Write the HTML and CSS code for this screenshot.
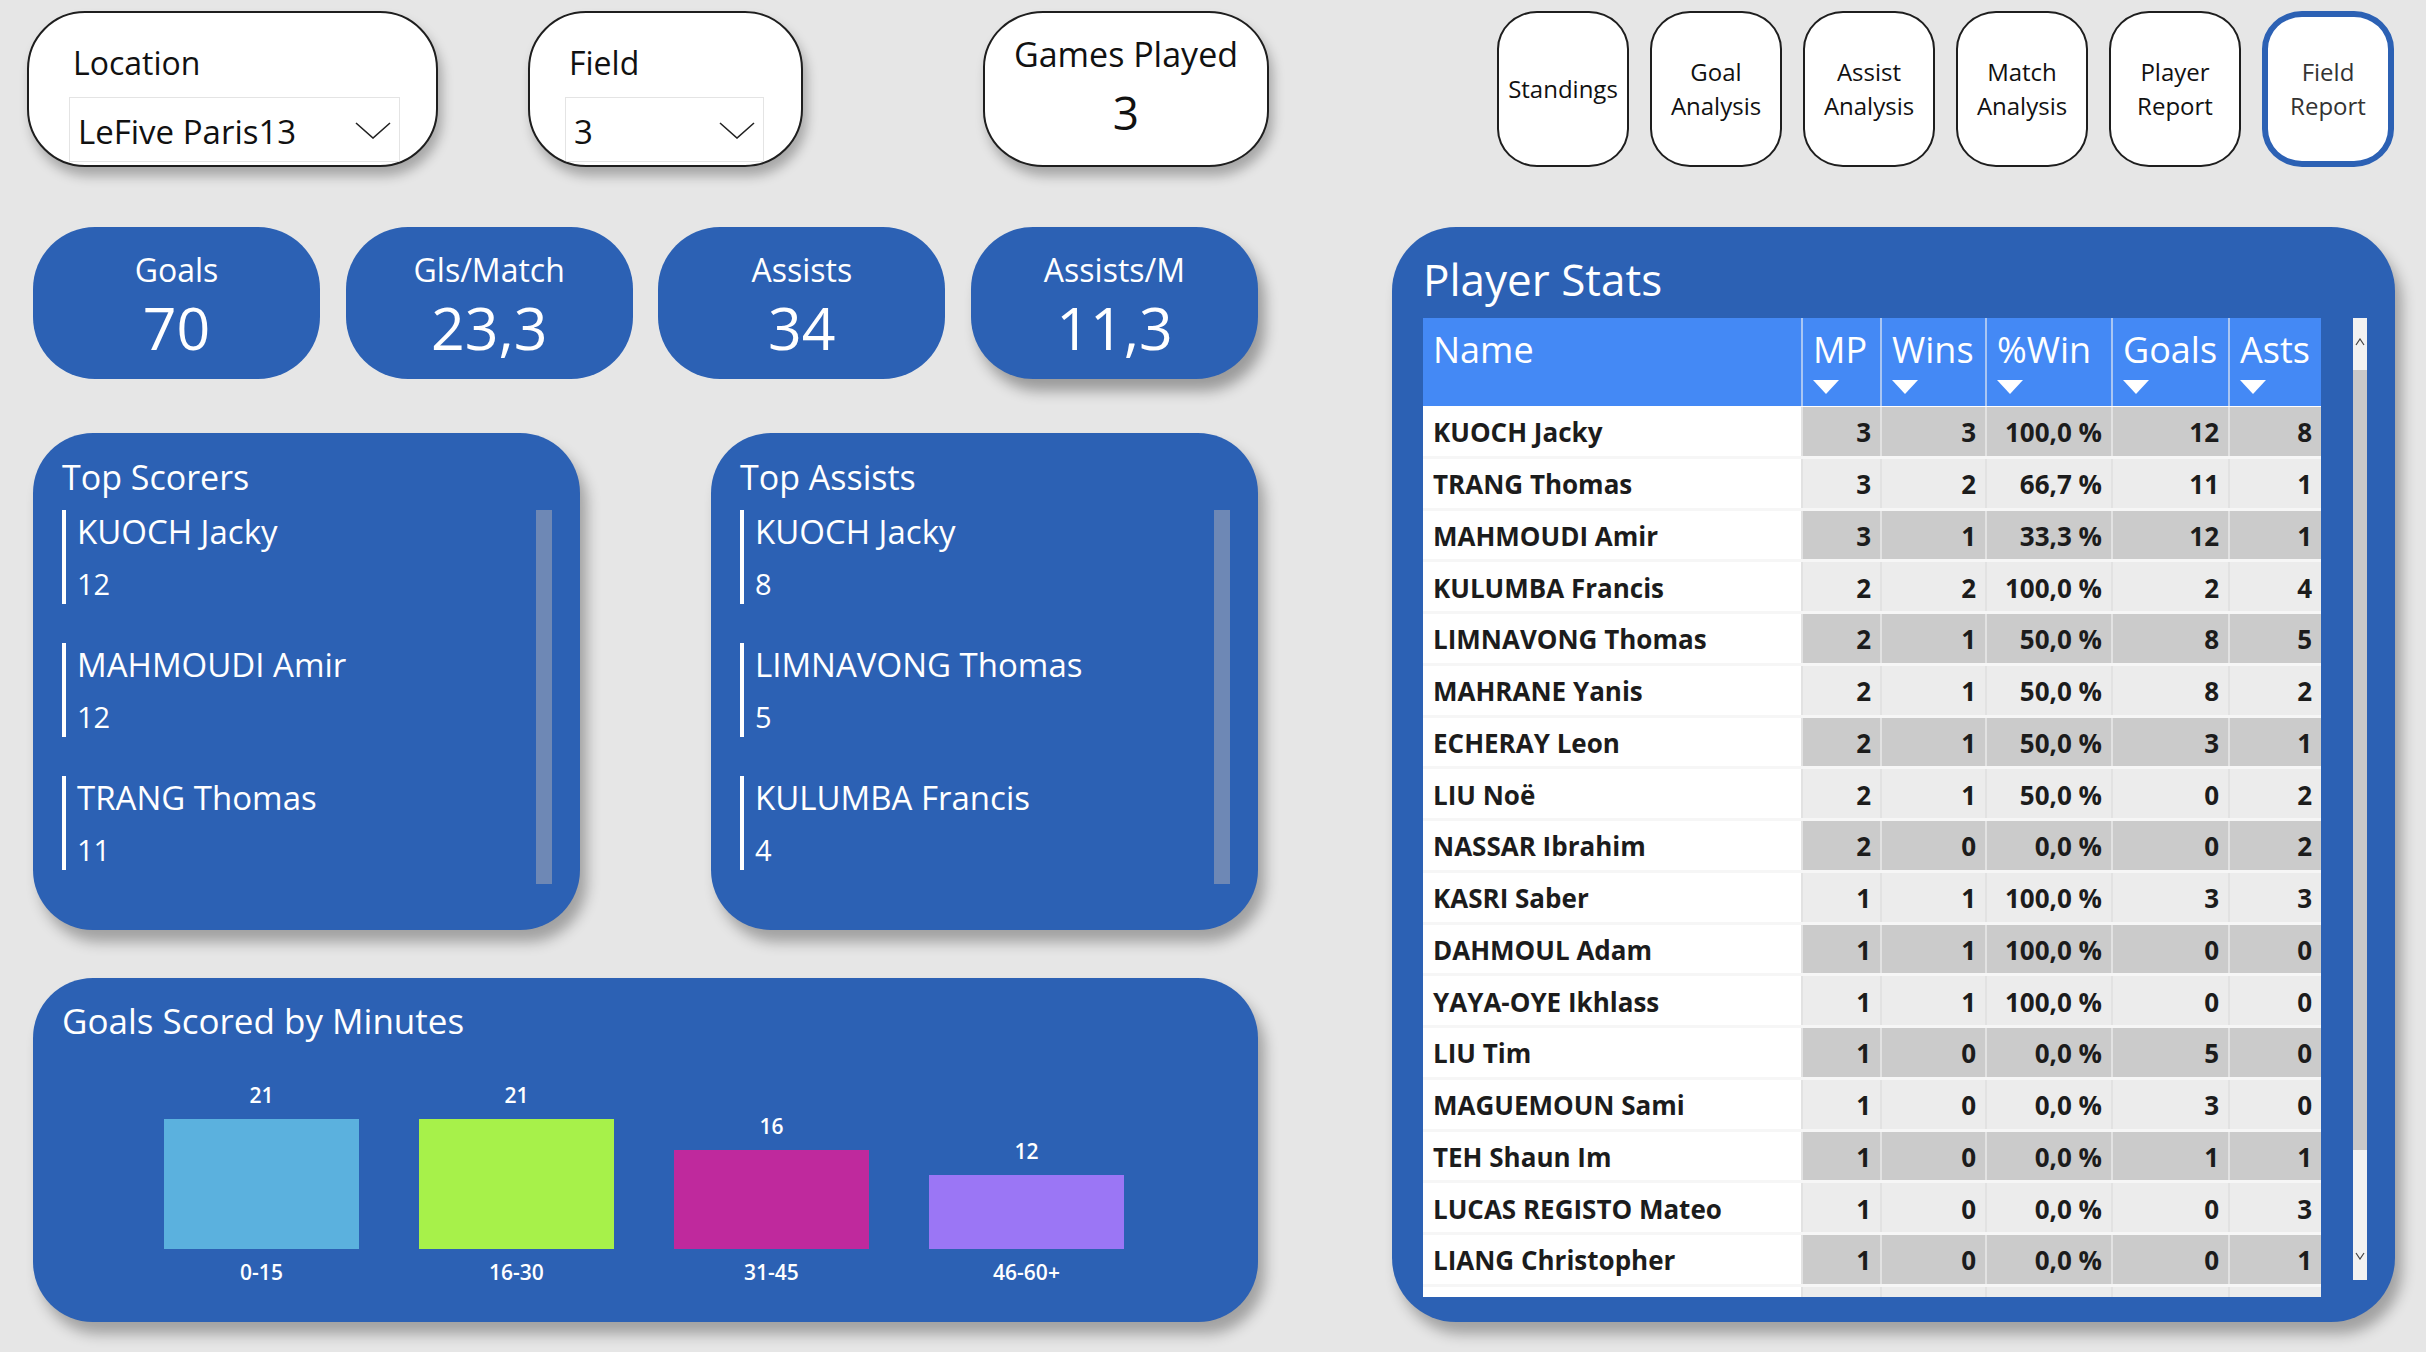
FILE: index.html
```html
<!DOCTYPE html>
<html lang="en">
<head>
<meta charset="utf-8">
<title>Field Report</title>
<link rel="stylesheet" href="styles.css">
</head>
<body>
<div class="page">
  <header class="topbar">
    <div class="filter location">
      <div class="filter-label">Location</div>
      <div class="dropdown">
        <span class="dd-value">LeFive Paris13</span>
        <svg class="chev" width="36" height="17" viewBox="0 0 36 17"><polyline points="1,1 18,16 35,1" fill="none" stroke="#222" stroke-width="1.6"/></svg>
      </div>
    </div>
    <div class="filter field">
      <div class="filter-label">Field</div>
      <div class="dropdown">
        <span class="dd-value small">3</span>
        <svg class="chev" width="36" height="17" viewBox="0 0 36 17"><polyline points="1,1 18,16 35,1" fill="none" stroke="#222" stroke-width="1.6"/></svg>
      </div>
    </div>
    <div class="games">
      <div class="games-label">Games Played</div>
      <div class="games-value">3</div>
    </div>
    <nav class="nav">
      <div class="nav-btn">Standings</div>
      <div class="nav-btn">Goal<br>Analysis</div>
      <div class="nav-btn">Assist<br>Analysis</div>
      <div class="nav-btn">Match<br>Analysis</div>
      <div class="nav-btn">Player<br>Report</div>
      <div class="nav-btn active">Field<br>Report</div>
    </nav>
  </header>

  <main class="main">
    <section class="left">
      <div class="kpis">
        <div class="kpi"><div class="kpi-label">Goals</div><div class="kpi-value">70</div></div>
        <div class="kpi"><div class="kpi-label">Gls/Match</div><div class="kpi-value">23,3</div></div>
        <div class="kpi"><div class="kpi-label">Assists</div><div class="kpi-value">34</div></div>
        <div class="kpi shadow"><div class="kpi-label">Assists/M</div><div class="kpi-value">11,3</div></div>
      </div>

      <div class="lists">
        <div class="card list-card scorers">
          <div class="card-title">Top Scorers</div>
          <div class="list-body">
            <div class="items">
              <div class="item"><div class="item-name">KUOCH Jacky</div><div class="item-num">12</div></div>
              <div class="item"><div class="item-name">MAHMOUDI Amir</div><div class="item-num">12</div></div>
              <div class="item"><div class="item-name">TRANG Thomas</div><div class="item-num">11</div></div>
            </div>
            <div class="list-scroll"></div>
          </div>
        </div>
        <div class="card list-card assists">
          <div class="card-title">Top Assists</div>
          <div class="list-body">
            <div class="items">
              <div class="item"><div class="item-name">KUOCH Jacky</div><div class="item-num">8</div></div>
              <div class="item"><div class="item-name">LIMNAVONG Thomas</div><div class="item-num">5</div></div>
              <div class="item"><div class="item-name">KULUMBA Francis</div><div class="item-num">4</div></div>
            </div>
            <div class="list-scroll"></div>
          </div>
        </div>
      </div>

      <div class="card chart-card">
        <div class="card-title chart-title">Goals Scored by Minutes</div>
        <div class="bars">
          <div class="col"><div class="bar-val">21</div><div class="bar c1" style="height:130px"></div><div class="bar-cat">0-15</div></div>
          <div class="col"><div class="bar-val">21</div><div class="bar c2" style="height:130px"></div><div class="bar-cat">16-30</div></div>
          <div class="col"><div class="bar-val">16</div><div class="bar c3" style="height:99px"></div><div class="bar-cat">31-45</div></div>
          <div class="col"><div class="bar-val">12</div><div class="bar c4" style="height:74px"></div><div class="bar-cat">46-60+</div></div>
        </div>
      </div>
    </section>

    <section class="card stats">
      <div class="stats-title">Player Stats</div>
      <div class="stats-body">
        <div class="table">
          <div class="thead">
            <div class="th name-col">Name</div>
            <div class="th"><span>MP</span><svg class="sort" width="26" height="14" viewBox="0 0 26 14"><polygon points="0,0 26,0 13,14" fill="#fff"/></svg></div>
            <div class="th"><span>Wins</span><svg class="sort" width="26" height="14" viewBox="0 0 26 14"><polygon points="0,0 26,0 13,14" fill="#fff"/></svg></div>
            <div class="th"><span>%Win</span><svg class="sort" width="26" height="14" viewBox="0 0 26 14"><polygon points="0,0 26,0 13,14" fill="#fff"/></svg></div>
            <div class="th"><span>Goals</span><svg class="sort" width="26" height="14" viewBox="0 0 26 14"><polygon points="0,0 26,0 13,14" fill="#fff"/></svg></div>
            <div class="th last"><span>Asts</span><svg class="sort" width="26" height="14" viewBox="0 0 26 14"><polygon points="0,0 26,0 13,14" fill="#fff"/></svg></div>
          </div>
          <div class="tbody">
            <div class="tr dark"><div class="td name">KUOCH Jacky</div><div class="td">3</div><div class="td">3</div><div class="td">100,0 %</div><div class="td">12</div><div class="td">8</div></div>
            <div class="tr"><div class="td name">TRANG Thomas</div><div class="td">3</div><div class="td">2</div><div class="td">66,7 %</div><div class="td">11</div><div class="td">1</div></div>
            <div class="tr dark"><div class="td name">MAHMOUDI Amir</div><div class="td">3</div><div class="td">1</div><div class="td">33,3 %</div><div class="td">12</div><div class="td">1</div></div>
            <div class="tr"><div class="td name">KULUMBA Francis</div><div class="td">2</div><div class="td">2</div><div class="td">100,0 %</div><div class="td">2</div><div class="td">4</div></div>
            <div class="tr dark"><div class="td name">LIMNAVONG Thomas</div><div class="td">2</div><div class="td">1</div><div class="td">50,0 %</div><div class="td">8</div><div class="td">5</div></div>
            <div class="tr"><div class="td name">MAHRANE Yanis</div><div class="td">2</div><div class="td">1</div><div class="td">50,0 %</div><div class="td">8</div><div class="td">2</div></div>
            <div class="tr dark"><div class="td name">ECHERAY Leon</div><div class="td">2</div><div class="td">1</div><div class="td">50,0 %</div><div class="td">3</div><div class="td">1</div></div>
            <div class="tr"><div class="td name">LIU Noë</div><div class="td">2</div><div class="td">1</div><div class="td">50,0 %</div><div class="td">0</div><div class="td">2</div></div>
            <div class="tr dark"><div class="td name">NASSAR Ibrahim</div><div class="td">2</div><div class="td">0</div><div class="td">0,0 %</div><div class="td">0</div><div class="td">2</div></div>
            <div class="tr"><div class="td name">KASRI Saber</div><div class="td">1</div><div class="td">1</div><div class="td">100,0 %</div><div class="td">3</div><div class="td">3</div></div>
            <div class="tr dark"><div class="td name">DAHMOUL Adam</div><div class="td">1</div><div class="td">1</div><div class="td">100,0 %</div><div class="td">0</div><div class="td">0</div></div>
            <div class="tr"><div class="td name">YAYA-OYE Ikhlass</div><div class="td">1</div><div class="td">1</div><div class="td">100,0 %</div><div class="td">0</div><div class="td">0</div></div>
            <div class="tr dark"><div class="td name">LIU Tim</div><div class="td">1</div><div class="td">0</div><div class="td">0,0 %</div><div class="td">5</div><div class="td">0</div></div>
            <div class="tr"><div class="td name">MAGUEMOUN Sami</div><div class="td">1</div><div class="td">0</div><div class="td">0,0 %</div><div class="td">3</div><div class="td">0</div></div>
            <div class="tr dark"><div class="td name">TEH Shaun Im</div><div class="td">1</div><div class="td">0</div><div class="td">0,0 %</div><div class="td">1</div><div class="td">1</div></div>
            <div class="tr"><div class="td name">LUCAS REGISTO Mateo</div><div class="td">1</div><div class="td">0</div><div class="td">0,0 %</div><div class="td">0</div><div class="td">3</div></div>
            <div class="tr dark"><div class="td name">LIANG Christopher</div><div class="td">1</div><div class="td">0</div><div class="td">0,0 %</div><div class="td">0</div><div class="td">1</div></div>
            <div class="tr"><div class="td name"></div><div class="td"></div><div class="td"></div><div class="td"></div><div class="td"></div><div class="td"></div></div>
          </div>
        </div>
        <div class="vscroll">
          <svg class="arrow-up" width="10" height="8" viewBox="0 0 10 8"><polyline points="1,7 5,1 9,7" fill="none" stroke="#444" stroke-width="1.2"/></svg>
          <div class="thumb"></div>
          <svg class="arrow-down" width="10" height="8" viewBox="0 0 10 8"><polyline points="1,1 5,7 9,1" fill="none" stroke="#444" stroke-width="1.2"/></svg>
        </div>
      </div>
    </section>
  </main>
</div>
</body>
</html>
```

FILE: styles.css
```css
* { box-sizing: border-box; }
html, body { margin: 0; padding: 0; }
body {
  background: #e6e6e6;
  font-family: "Open Sans", "Noto Sans", "DejaVu Sans", sans-serif;
  color: #111;
  overflow: hidden;
}
.page {
  width: 2426px;
  height: 1352px;
  background: #e6e6e6;
}

/* ---------- top bar ---------- */
.topbar {
  display: flex;
  align-items: flex-start;
  padding-top: 11px;
  height: 166px;
}
.filter {
  height: 156px;
  background: #fff;
  border: 2px solid #1e1e1e;
  border-radius: 58px;
  box-shadow: 4px 9px 12px rgba(0,0,0,0.28);
  overflow: hidden;
  padding: 30px 0 0 0;
}
.location { margin-left: 27px; width: 411px; padding-left: 44px; padding-right: 36px; }
.field { margin-left: 90px; width: 275px; padding-left: 39px; padding-right: 37px; }
.filter-label {
  font-size: 32px;
  line-height: 40px;
  color: #111;
}
.dropdown {
  margin-top: 14px;
  margin-left: -4px;
  height: 65px;
  border: 1.5px solid #e4e4e4;
  display: flex;
  align-items: flex-start;
  justify-content: space-between;
  padding: 12px 8px 0 8px;
}
.dd-value {
  font-size: 33px;
  line-height: 44px;
  color: #111;
}
.dd-value.small { font-size: 33px; }
.chev { margin-top: 12px; }

.games {
  margin-left: 180px;
  width: 286px;
  height: 156px;
  background: #fff;
  border: 2px solid #1e1e1e;
  border-radius: 60px / 56px;
  box-shadow: 4px 9px 12px rgba(0,0,0,0.28);
  text-align: center;
  padding-top: 19px;
}
.games-label {
  font-size: 34px;
  line-height: 44px;
  color: #111;
}
.games-value {
  margin-top: 11px;
  font-size: 46px;
  line-height: 50px;
  color: #111;
}

.nav {
  margin-left: auto;
  margin-right: 32px;
  display: flex;
  gap: 21px;
}
.nav-btn {
  width: 132px;
  height: 156px;
  background: #fff;
  border: 2px solid #1e1e1e;
  border-radius: 40px / 38px;
  display: flex;
  align-items: center;
  justify-content: center;
  text-align: center;
  font-size: 24px;
  line-height: 34px;
  color: #111;
}
.nav-btn.active {
  border: 6px solid #2c61b4;
  color: #333;
}

/* ---------- main ---------- */
.main {
  display: flex;
  margin-top: 61px;
}
.left {
  margin-left: 33px;
  width: 1225px;
  display: flex;
  flex-direction: column;
}
.kpis {
  display: flex;
  justify-content: space-between;
}
.kpi {
  width: 287px;
  height: 152px;
  background: #2c61b4;
  border-radius: 62px;
  color: #fff;
  text-align: center;
  padding-top: 23px;
}
.kpi.shadow { box-shadow: 7px 12px 14px rgba(0,0,0,0.33); }
.kpi-label {
  font-size: 32px;
  line-height: 40px;
}
.kpi-value {
  margin-top: 5px;
  font-size: 59px;
  line-height: 64px;
}

.card {
  background: #2c61b4;
  color: #fff;
  box-shadow: 7px 12px 14px rgba(0,0,0,0.3);
}
.lists {
  margin-top: 54px;
  display: flex;
  justify-content: space-between;
}
.list-card {
  width: 547px;
  height: 497px;
  border-radius: 60px;
  padding: 22px 28px 0 29px;
}
.card-title {
  font-size: 34px;
  line-height: 45px;
}
.list-body {
  margin-top: 10px;
  display: flex;
  justify-content: space-between;
}
.items { flex: 1; }
.item {
  border-left: 4px solid #fff;
  padding-left: 11px;
  padding-top: 6px;
  height: 94px;
  margin-bottom: 39px;
}
.item-name {
  font-size: 33px;
  line-height: 32px;
}
.item-num {
  margin-top: 20px;
  font-size: 29px;
  line-height: 32px;
}
.list-scroll {
  width: 16px;
  height: 374px;
  background: #6e88b5;
}

.chart-card {
  margin-top: 48px;
  height: 344px;
  border-radius: 60px;
  padding: 20px 0 0 29px;
}
.chart-title { font-size: 35px; }
.bars {
  height: 242px;
  display: flex;
  align-items: flex-end;
  gap: 60px;
  padding-left: 102px;
}
.col {
  width: 195px;
  display: flex;
  flex-direction: column;
  align-items: center;
}
.bar-val, .bar-cat {
  font-size: 21px;
  line-height: 26px;
  font-weight: 600;
}
.bar-val { margin-bottom: 11px; }
.bar-cat { margin-top: 10px; }
.bar { width: 195px; }
.c1 { background: #5bb1de; }
.c2 { background: #a7f14a; }
.c3 { background: #bf299d; }
.c4 { background: #9b76f5; }

/* ---------- player stats ---------- */
.stats {
  margin-left: 134px;
  width: 1003px;
  height: 1095px;
  border-radius: 64px;
  padding: 24px 28px 0 31px;
}
.stats-title {
  font-size: 44px;
  line-height: 56px;
}
.stats-body {
  margin-top: 11px;
  display: flex;
  align-items: flex-start;
}
.table {
  width: 898px;
  height: 979px;
  overflow: hidden;
  background: #fff;
}
.thead {
  display: grid;
  grid-template-columns: 378px 79px 105px 126px 117px 93px;
  height: 89px;
  background: #4489f5;
  border-bottom: 1px solid #fff;
}
.th {
  display: flex;
  flex-direction: column;
  align-items: flex-start;
  padding: 10px 0 0 10px;
  font-size: 36px;
  line-height: 44px;
  color: #fff;
  border-left: 2px solid #a9c6f3;
}
.th.name-col { border-left: none; }
.th .sort { margin-top: 8px; }
.tbody { display: flex; flex-direction: column; }
.tr {
  display: grid;
  grid-template-columns: 378px 79px 105px 126px 117px 93px;
  height: 51.75px;
  border-bottom: 3px solid #f6f6f6;
  background: #ececec;
}
.tr.dark { background: #cbcbcb; }
.td {
  display: flex;
  align-items: center;
  justify-content: flex-end;
  padding-right: 9px;
  padding-top: 2px;
  font-size: 26px;
  font-weight: 700;
  color: #1c1c1c;
  border-left: 2px solid #e2e2e2;
  white-space: nowrap;
}
.td.name {
  justify-content: flex-start;
  padding-left: 10px;
  background: #fff;
  border-left: none;
}
.vscroll {
  margin-left: 32px;
  width: 14px;
  height: 962px;
  background: #f2f2f2;
  display: flex;
  flex-direction: column;
  align-items: center;
}
.arrow-up { margin-top: 20px; }
.thumb {
  margin-top: 24px;
  width: 14px;
  height: 780px;
  background: #c9c9c9;
}
.arrow-down { margin-top: 102px; }
```
